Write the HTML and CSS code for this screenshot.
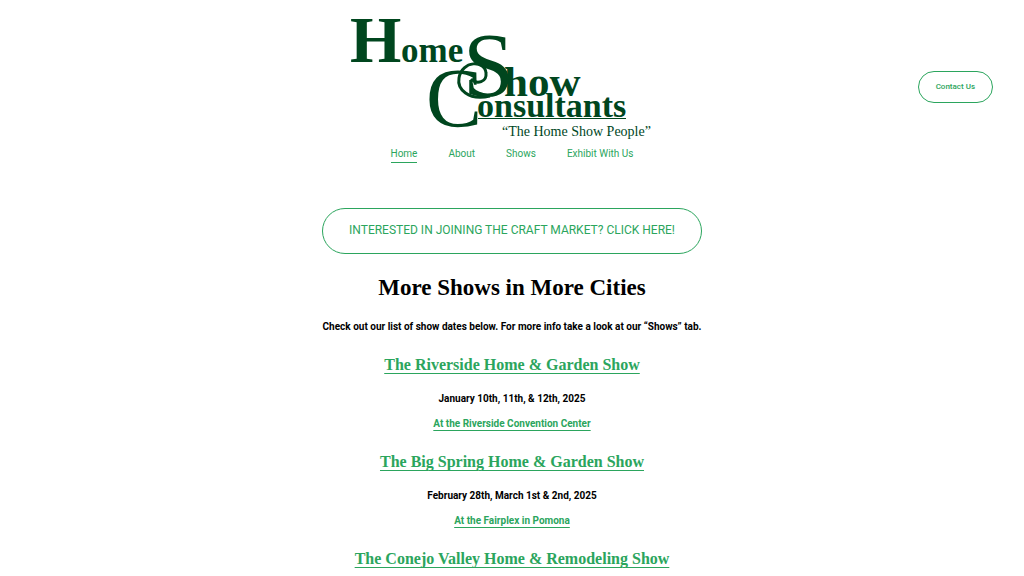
FILE: index.html
```html
<!DOCTYPE html>
<html lang="en">
<head>
<meta charset="utf-8">
<meta name="viewport" content="width=device-width, initial-scale=1">
<title>Home Show Consultants</title>
<link rel="stylesheet" href="styles.css">
</head>
<body>
<header class="header">
  <div class="brand">
    <a class="logo-link" href="#" aria-label="Home Show Consultants">
      <svg class="logo" viewBox="0 0 324 136" width="324" height="136" role="img" aria-label="Home Show Consultants">
        <g class="logo-bold">
          <text x="0" y="56" font-size="66">H</text>
          <text x="51" y="56" font-size="35">ome</text>
          <text x="154" y="90" font-size="43">how</text>
          <text x="127" y="111" font-size="34">onsultants</text>
        </g>
        <g class="logo-plain">
          <text x="76" y="121" font-size="84">C</text>
          <text x="113" y="90" font-size="92">S</text>
          <text x="152" y="130" font-size="14">“The Home Show People”</text>
        </g>
        <path class="logo-swash" d="M140 90C118 95 107 83 109 72C112 54 135 54 136 67C137 76 127 79 121 73"/>
        <path class="logo-rule" d="M128 112.500H276"/>
      </svg>
    </a>
    <nav class="nav" aria-label="Main">
      <a class="nav-link nav-current" href="#" aria-current="page">Home</a>
      <a class="nav-link" href="#">About</a>
      <a class="nav-link" href="#">Shows</a>
      <a class="nav-link" href="#">Exhibit With Us</a>
    </nav>
  </div>
  <a class="pill contact" href="#">Contact Us</a>
</header>
<main class="main">
  <a class="pill banner" href="#">INTERESTED IN JOINING THE CRAFT MARKET? CLICK HERE!</a>
  <h1 class="title">More Shows in More Cities</h1>
  <p class="text">Check out our list of show dates below. For more info take a look at our “Shows” tab.</p>
  <h2 class="show"><a class="link" href="#">The Riverside Home &amp; Garden Show</a></h2>
  <p class="text">January 10th, 11th, &amp; 12th, 2025</p>
  <p class="text"><a class="link" href="#">At the Riverside Convention Center</a></p>
  <h2 class="show"><a class="link" href="#">The Big Spring Home &amp; Garden Show</a></h2>
  <p class="text">February 28th, March 1st &amp; 2nd, 2025</p>
  <p class="text"><a class="link" href="#">At the Fairplex in Pomona</a></p>
  <h2 class="show"><a class="link" href="#">The Conejo Valley Home &amp; Remodeling Show</a></h2>
</main>
</body>
</html>
```

FILE: styles.css
```css
* { box-sizing: border-box; }
html { overflow-x: hidden; scrollbar-width: none; }
body {
  margin: 0;
  background: #fff;
  color: #000;
  font-family: Roboto, "Liberation Sans", sans-serif;
}
.header {
  display: grid;
  grid-template-columns: 1fr auto 1fr;
  align-items: center;
  padding: 6px 31px 10px;
}
.brand {
  grid-column: 2;
  display: flex;
  flex-direction: column;
  align-items: center;
}
.logo-link { display: block; }
.logo { display: block; overflow: visible; }
.logo-bold, .logo-plain { fill: #00461e; font-family: "Liberation Serif", serif; }
.logo-bold { font-weight: 700; }
.logo-swash { fill: none; stroke: #00461e; stroke-width: 3; }
.logo-rule { stroke: #00461e; stroke-width: 1; }
.nav { display: flex; gap: 31px; margin-top: 4px; }
.nav-link {
  padding-bottom: 1px;
  border-bottom: 1px solid transparent;
  color: #2ba55d;
  font-size: 10px;
  line-height: 15px;
  text-decoration: none;
}
.nav-current { border-bottom-color: #2ba55d; }
.pill {
  border: 1px solid #2ba55d;
  color: #2ba55d;
  text-align: center;
  text-decoration: none;
}
.contact {
  justify-self: end;
  margin-top: 4px;
  padding: 8px 17px;
  border-radius: 16px;
  font-size: 8px;
  font-weight: 500;
  line-height: 14px;
}
.main {
  display: flex;
  flex-direction: column;
  align-items: center;
  padding: 35px 30px 0;
  text-align: center;
}
.banner {
  padding: 12px 26px 14px;
  border-radius: 23px;
  font-size: 12px;
  line-height: 18px;
}
.title, .show {
  font-family: "Liberation Serif", serif;
  font-weight: 700;
}
.title { margin: 18px 0 15px; font-size: 23px; line-height: 32px; }
.text { margin: 0 0 9px; font-size: 10px; font-weight: 700; line-height: 16px; }
.show { margin: 9px 0 14px; font-size: 16px; line-height: 24px; }
.link {
  color: #2ba55d;
  text-decoration: underline;
  text-decoration-thickness: 1px;
  text-underline-offset: 3px;
}
```
